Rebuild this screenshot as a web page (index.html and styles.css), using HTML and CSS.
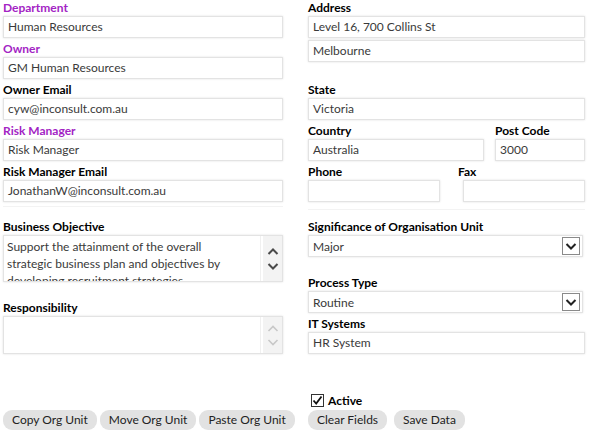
FILE: index.html
```html
<!DOCTYPE html>
<html>
<head>
<meta charset="utf-8">
<link rel="stylesheet" href="styles.css">
</head>
<body>
<div class="form">
  <div class="col">
    <div class="field"><div class="label req">Department</div><div class="input">Human Resources</div></div>
    <div class="field"><div class="label req">Owner</div><div class="input">GM Human Resources</div></div>
    <div class="field"><div class="label">Owner Email</div><div class="input">cyw@inconsult.com.au</div></div>
    <div class="field"><div class="label req">Risk Manager</div><div class="input">Risk Manager</div></div>
    <div class="field sep"><div class="label">Risk Manager Email</div><div class="input">JonathanW@inconsult.com.au</div></div>
    <div class="field ta-field"><div class="label">Business Objective</div>
      <div class="textarea tall">
        <div class="ta-text">Support the attainment of the overall strategic business plan and objectives by developing recruitment strategies</div>
        <div class="scroll">
          <svg width="12" height="30" viewBox="0 0 12 30"><path d="M1.5 10 L6 5.5 L10.5 10" fill="none" stroke="#4a4a4a" stroke-width="2"/><path d="M1.5 20 L6 24.5 L10.5 20" fill="none" stroke="#4a4a4a" stroke-width="2"/></svg>
        </div>
      </div>
    </div>
    <div class="field resp"><div class="label">Responsibility</div>
      <div class="textarea short">
        <div class="ta-text"></div>
        <div class="scroll">
          <svg width="12" height="30" viewBox="0 0 12 30"><path d="M1.5 11 L6 6.5 L10.5 11" fill="none" stroke="#c8c8c8" stroke-width="1.6"/><path d="M1.5 20 L6 24.5 L10.5 20" fill="none" stroke="#c8c8c8" stroke-width="1.6"/></svg>
        </div>
      </div>
    </div>
  </div>
  <div class="col">
    <div class="field"><div class="label">Address</div><div class="input">Level 16, 700 Collins St</div><div class="input second">Melbourne</div></div>
    <div class="field state"><div class="label">State</div><div class="input">Victoria</div></div>
    <div class="row">
      <div class="field country"><div class="label">Country</div><div class="input">Australia</div></div>
      <div class="field post"><div class="label">Post Code</div><div class="input">3000</div></div>
    </div>
    <div class="row sep">
      <div class="field phone"><div class="label">Phone</div><div class="input"></div></div>
      <div class="field fax"><div class="label">Fax</div><div class="input"></div></div>
    </div>
    <div class="field ta-field"><div class="label">Significance of Organisation Unit</div>
      <div class="select"><span>Major</span><span class="arrow"><svg width="18" height="18" viewBox="0 0 18 18"><rect x="0.5" y="0.5" width="17" height="17" fill="#fff" stroke="#8a8a8a"/><path d="M4.5 7 L9 11.5 L13.5 7" fill="none" stroke="#222" stroke-width="2"/></svg></span></div>
    </div>
    <div class="field ptype"><div class="label">Process Type</div>
      <div class="select"><span>Routine</span><span class="arrow"><svg width="18" height="18" viewBox="0 0 18 18"><rect x="0.5" y="0.5" width="17" height="17" fill="#fff" stroke="#8a8a8a"/><path d="M4.5 7 L9 11.5 L13.5 7" fill="none" stroke="#222" stroke-width="2"/></svg></span></div>
    </div>
    <div class="field"><div class="label">IT Systems</div><div class="input">HR System</div></div>
  </div>
  <div class="footer-left">
    <div class="buttons">
      <button class="btn">Copy Org Unit</button>
      <button class="btn">Move Org Unit</button>
      <button class="btn">Paste Org Unit</button>
    </div>
  </div>
  <div class="footer-right">
    <div class="active"><svg width="13" height="13" viewBox="0 0 13 13"><rect x="0.5" y="0.5" width="12" height="12" fill="#fff" stroke="#333"/><path d="M2.5 6.5 L5.2 9.5 L10.5 2.5" fill="none" stroke="#111" stroke-width="1.8"/></svg><span>Active</span></div>
    <div class="buttons right">
      <button class="btn">Clear Fields</button>
      <button class="btn">Save Data</button>
    </div>
  </div>
</div>
</body>
</html>
```

FILE: styles.css
```css
html, body {
  margin: 0;
  padding: 0;
  background: #fff;
}
body {
  font-family: Lato, "Open Sans", sans-serif;
  font-size: 12px;
  color: #000;
}
.form {
  display: grid;
  grid-template-columns: 280px 277px;
  column-gap: 25px;
  padding-left: 3px;
}
.col {
  display: flex;
  flex-direction: column;
}
.field {
  display: flex;
  flex-direction: column;
  margin-bottom: 3px;
}
.label {
  font-weight: bold;
  line-height: 15px;
  height: 15px;
  margin-bottom: 1px;
  white-space: nowrap;
}
.label.req {
  color: #a324c4;
}
.input {
  box-sizing: border-box;
  height: 22px;
  border: 1px solid #e3e3e3;
  box-shadow: 0 0 2px rgba(0,0,0,0.12);
  background: #fff;
  color: #3a3a3a;
  line-height: 20px;
  padding-left: 4px;
  white-space: nowrap;
  overflow: hidden;
}
.input.second {
  margin-top: 2px;
}
.state {
  margin-top: 17px;
}
.row {
  display: flex;
  justify-content: space-between;
}
.country { width: 176px; }
.post { width: 90px; }
.phone { width: 132px; }
.fax { width: 127px; }
.fax .input { margin-left: 5px; }
.sep {
  border-bottom: 1px solid #f3f3f3;
  padding-bottom: 4px;
}
.ta-field {
  margin-top: 9px;
}
.textarea {
  box-sizing: border-box;
  border: 1px solid #e3e3e3;
  box-shadow: 0 0 2px rgba(0,0,0,0.12);
  display: flex;
  background: #fff;
  overflow: hidden;
}
.textarea.tall { height: 47px; }
.textarea.short { height: 38px; }
.ta-text {
  flex: 1;
  padding: 2px 20px 2px 3px;
  line-height: 17px;
  color: #3a3a3a;
  overflow: hidden;
  margin-right: 2px;
  border-right: 1px solid #f0f0f0;
}
.scroll {
  width: 19px;
  background: #f3f3f3;
  display: flex;
  align-items: center;
  justify-content: center;
}
.resp {
  margin-top: 15px;
}
.select {
  box-sizing: border-box;
  height: 22px;
  width: 275px;
  border: 1px solid #e3e3e3;
  box-shadow: 0 0 2px rgba(0,0,0,0.12);
  display: flex;
  align-items: center;
  justify-content: space-between;
  padding-left: 4px;
  padding-right: 2px;
  color: #3a3a3a;
}
.arrow {
  display: flex;
}
.ptype {
  margin-top: 15px;
}
.footer-left {
  display: flex;
  align-items: flex-end;
}
.footer-right {
  display: flex;
  flex-direction: column;
  padding-top: 35px;
}
.active {
  display: flex;
  align-items: center;
  gap: 4px;
  padding-left: 3px;
  height: 16px;
  margin-bottom: 2px;
  font-weight: bold;
}
.buttons {
  display: flex;
  gap: 3px;
  white-space: nowrap;
}
.buttons.right {
  gap: 7px;
}
.btn {
  font-family: inherit;
  font-size: 12px;
  color: #222;
  background: #e2e2e2;
  border: none;
  border-radius: 9px;
  height: 20px;
  padding: 0 9px;
  line-height: 20px;
  margin: 0;
}
```
